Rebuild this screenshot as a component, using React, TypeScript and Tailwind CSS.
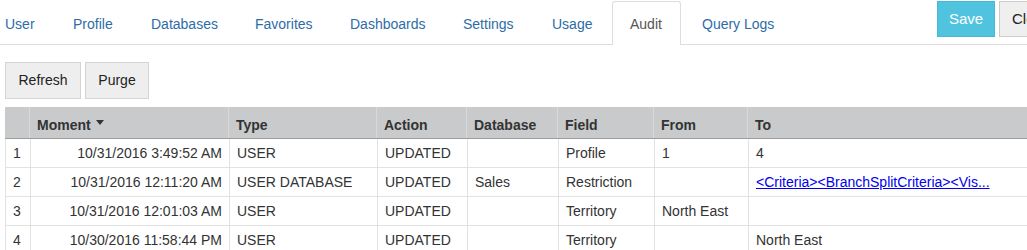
import React from "react";

const tabs = [
  { label: "User", w: "w-[55px]", pl: "pl-[5px]" },
  { label: "Profile", w: "w-[78px]", pl: "pl-[18px]" },
  { label: "Databases", w: "w-[104px]", pl: "pl-[18px]" },
  { label: "Favorites", w: "w-[95px]", pl: "pl-[18px]" },
  { label: "Dashboards", w: "w-[113px]", pl: "pl-[18px]" },
  { label: "Settings", w: "w-[89px]", pl: "pl-[18px]" },
  { label: "Usage", w: "w-[78px]", pl: "pl-[18px]" },
];

type Row = {
  n: string;
  moment: string;
  type: string;
  action: string;
  db: string;
  field: string;
  from: string;
  to: string;
  link?: boolean;
};

const rows: Row[] = [
  { n: "1", moment: "10/31/2016 3:49:52 AM", type: "USER", action: "UPDATED", db: "", field: "Profile", from: "1", to: "4" },
  { n: "2", moment: "10/31/2016 12:11:20 AM", type: "USER DATABASE", action: "UPDATED", db: "Sales", field: "Restriction", from: "", to: "<Criteria><BranchSplitCriteria><Vis...", link: true },
  { n: "3", moment: "10/31/2016 12:01:03 AM", type: "USER", action: "UPDATED", db: "", field: "Territory", from: "North East", to: "" },
  { n: "4", moment: "10/30/2016 11:58:44 PM", type: "USER", action: "UPDATED", db: "", field: "Territory", from: "", to: "North East" },
];

const th = "h-[31px] flex items-center px-[7px] pt-[6px] border-r border-[#d7d8d9] font-bold text-[#333]";
const td = "h-[29px] flex items-center px-[7px] border-r border-b border-[#e2e2e2] text-[#333] whitespace-nowrap overflow-hidden";

export default function App() {
  return (
    <div
      className="w-[1027px] h-[250px] overflow-hidden bg-white text-[14px]"
      style={{ fontFamily: '"Liberation Sans", Arial, Helvetica, sans-serif' }}
    >
      {/* Tab bar */}
      <div className="flex items-start h-[45px] border-b border-[#dddddd] w-[1060px]">
        {tabs.map((t) => (
          <div
            key={t.label}
            className={`${t.w} ${t.pl} mt-[1px] h-[44px] pt-[2px] flex items-center text-[#2d6da6] shrink-0`}
          >
            {t.label}
          </div>
        ))}
        <div className="w-[69px] mt-[1px] h-[44px] pl-[17px] pt-[1px] flex items-center bg-white border-x border-t border-[#dddddd] rounded-t-[3px] text-[#555] shrink-0">
          Audit
        </div>
        <div className="ml-[3px] pl-[18px] mt-[1px] h-[44px] pt-[2px] flex items-center text-[#2d6da6] shrink-0">
          Query Logs
        </div>
        <div className="ml-auto flex items-start gap-[4px] mt-[1px] shrink-0">
          <div className="w-[58px] h-[36px] flex items-center justify-center bg-[#50c4df] border border-[#46b8da] text-white text-[15px]">
            Save
          </div>
          <div className="w-[61px] h-[36px] flex items-center pl-[12px] bg-[#efefef] border border-[#cccccc] text-[#222] text-[15px]">
            Close
          </div>
        </div>
      </div>

      {/* Buttons */}
      <div className="flex gap-[4px] ml-[5px] mt-[17px]">
        <div className="w-[76px] h-[37px] flex items-center justify-center bg-[#eeeeee] border border-[#d4d4d4] text-[#222]">
          Refresh
        </div>
        <div className="w-[64px] h-[37px] flex items-center justify-center bg-[#eeeeee] border border-[#d4d4d4] text-[#222]">
          Purge
        </div>
      </div>

      {/* Table */}
      <div className="ml-[5px] mt-[8px] w-[1060px]">
        <div className="grid grid-cols-[25px_199px_148px_90px_91px_96px_94px_1fr] bg-[#c9cacb] border-b border-[#9c9c9c]">
          <div className={th}></div>
          <div className={th}>
            Moment
            <svg width="8" height="5" viewBox="0 0 8 5" className="ml-[5px] mb-[6px]">
              <path d="M0 0 L8 0 L4 5 Z" fill="#333" />
            </svg>
          </div>
          <div className={th}>Type</div>
          <div className={th}>Action</div>
          <div className={th}>Database</div>
          <div className={th}>Field</div>
          <div className={th}>From</div>
          <div className={th}>To</div>
        </div>
        {rows.map((r) => (
          <div
            key={r.n}
            className="grid grid-cols-[25px_199px_148px_90px_91px_96px_94px_1fr] border-l border-[#e2e2e2]"
          >
            <div className={`${td} pl-[7px]`}>{r.n}</div>
            <div className={`${td} justify-end`}>{r.moment}</div>
            <div className={td}>{r.type}</div>
            <div className={td}>{r.action}</div>
            <div className={td}>{r.db}</div>
            <div className={td}>{r.field}</div>
            <div className={td}>{r.from}</div>
            <div className={td}>
              {r.link ? (
                <span className="text-[#0000ee] underline">{r.to}</span>
              ) : (
                r.to
              )}
            </div>
          </div>
        ))}
      </div>
    </div>
  );
}
